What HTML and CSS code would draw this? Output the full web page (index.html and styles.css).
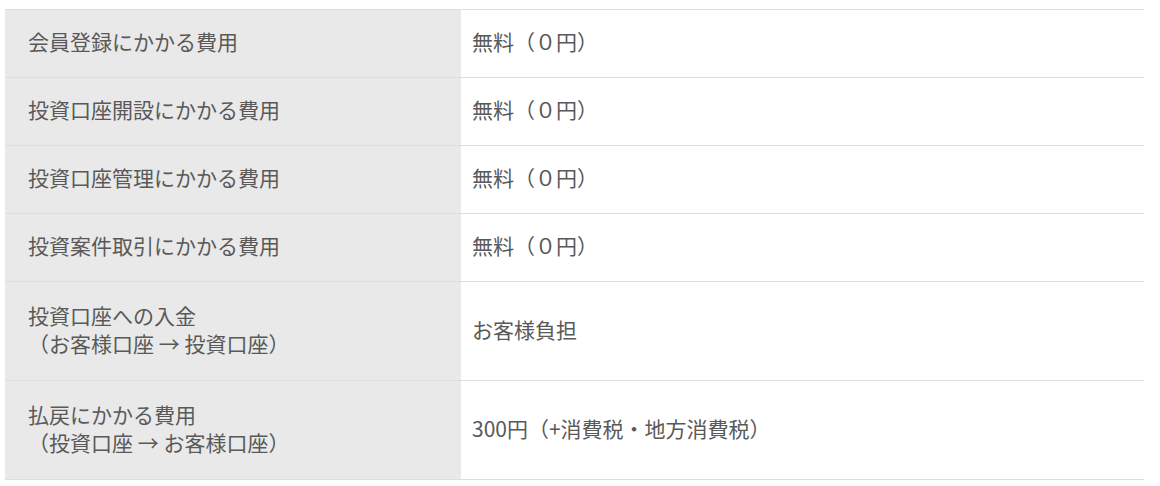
FILE: index.html
```html
<!DOCTYPE html>
<html lang="ja">
<head>
<meta charset="utf-8">
<link rel="stylesheet" href="styles.css">
</head>
<body>
<table class="fee-table">
  <tbody>
    <tr class="row">
      <th class="label">会員登録にかかる費用</th>
      <td class="value">無料（０円）</td>
    </tr>
    <tr class="row">
      <th class="label">投資口座開設にかかる費用</th>
      <td class="value">無料（０円）</td>
    </tr>
    <tr class="row">
      <th class="label">投資口座管理にかかる費用</th>
      <td class="value">無料（０円）</td>
    </tr>
    <tr class="row">
      <th class="label">投資案件取引にかかる費用</th>
      <td class="value">無料（０円）</td>
    </tr>
    <tr class="row row-double">
      <th class="label"><span class="line">投資口座への入金</span><span class="line">（お客様口座 → 投資口座）</span></th>
      <td class="value">お客様負担</td>
    </tr>
    <tr class="row row-double">
      <th class="label"><span class="line">払戻にかかる費用</span><span class="line">（投資口座 → お客様口座）</span></th>
      <td class="value">300円（+消費税・地方消費税）</td>
    </tr>
  </tbody>
</table>
</body>
</html>
```

FILE: styles.css
```css
html, body {
  margin: 0;
  padding: 0;
  background: #ffffff;
}

body {
  padding: 9px 0 0 5px;
  font-family: "Noto Sans CJK JP", "Noto Sans", sans-serif;
  color: #595959;
}

.fee-table {
  width: 1139px;
  border-collapse: collapse;
  table-layout: fixed;
}

.row {
  height: 68px;
  border-top: 1px solid #dedede;
  border-bottom: 1px solid #dedede;
}

.row-double {
  height: 99px;
}

.label {
  width: 456px;
  background: #e9e9e9;
  text-align: left;
  font-weight: normal;
  font-size: 21px;
  line-height: 26px;
  padding: 0 0 5px 23px;
  vertical-align: middle;
  box-sizing: border-box;
}

.line {
  display: block;
  line-height: 28px;
}

.value {
  font-size: 21px;
  line-height: 26px;
  padding: 0 0 5px 11px;
  vertical-align: middle;
}
```
